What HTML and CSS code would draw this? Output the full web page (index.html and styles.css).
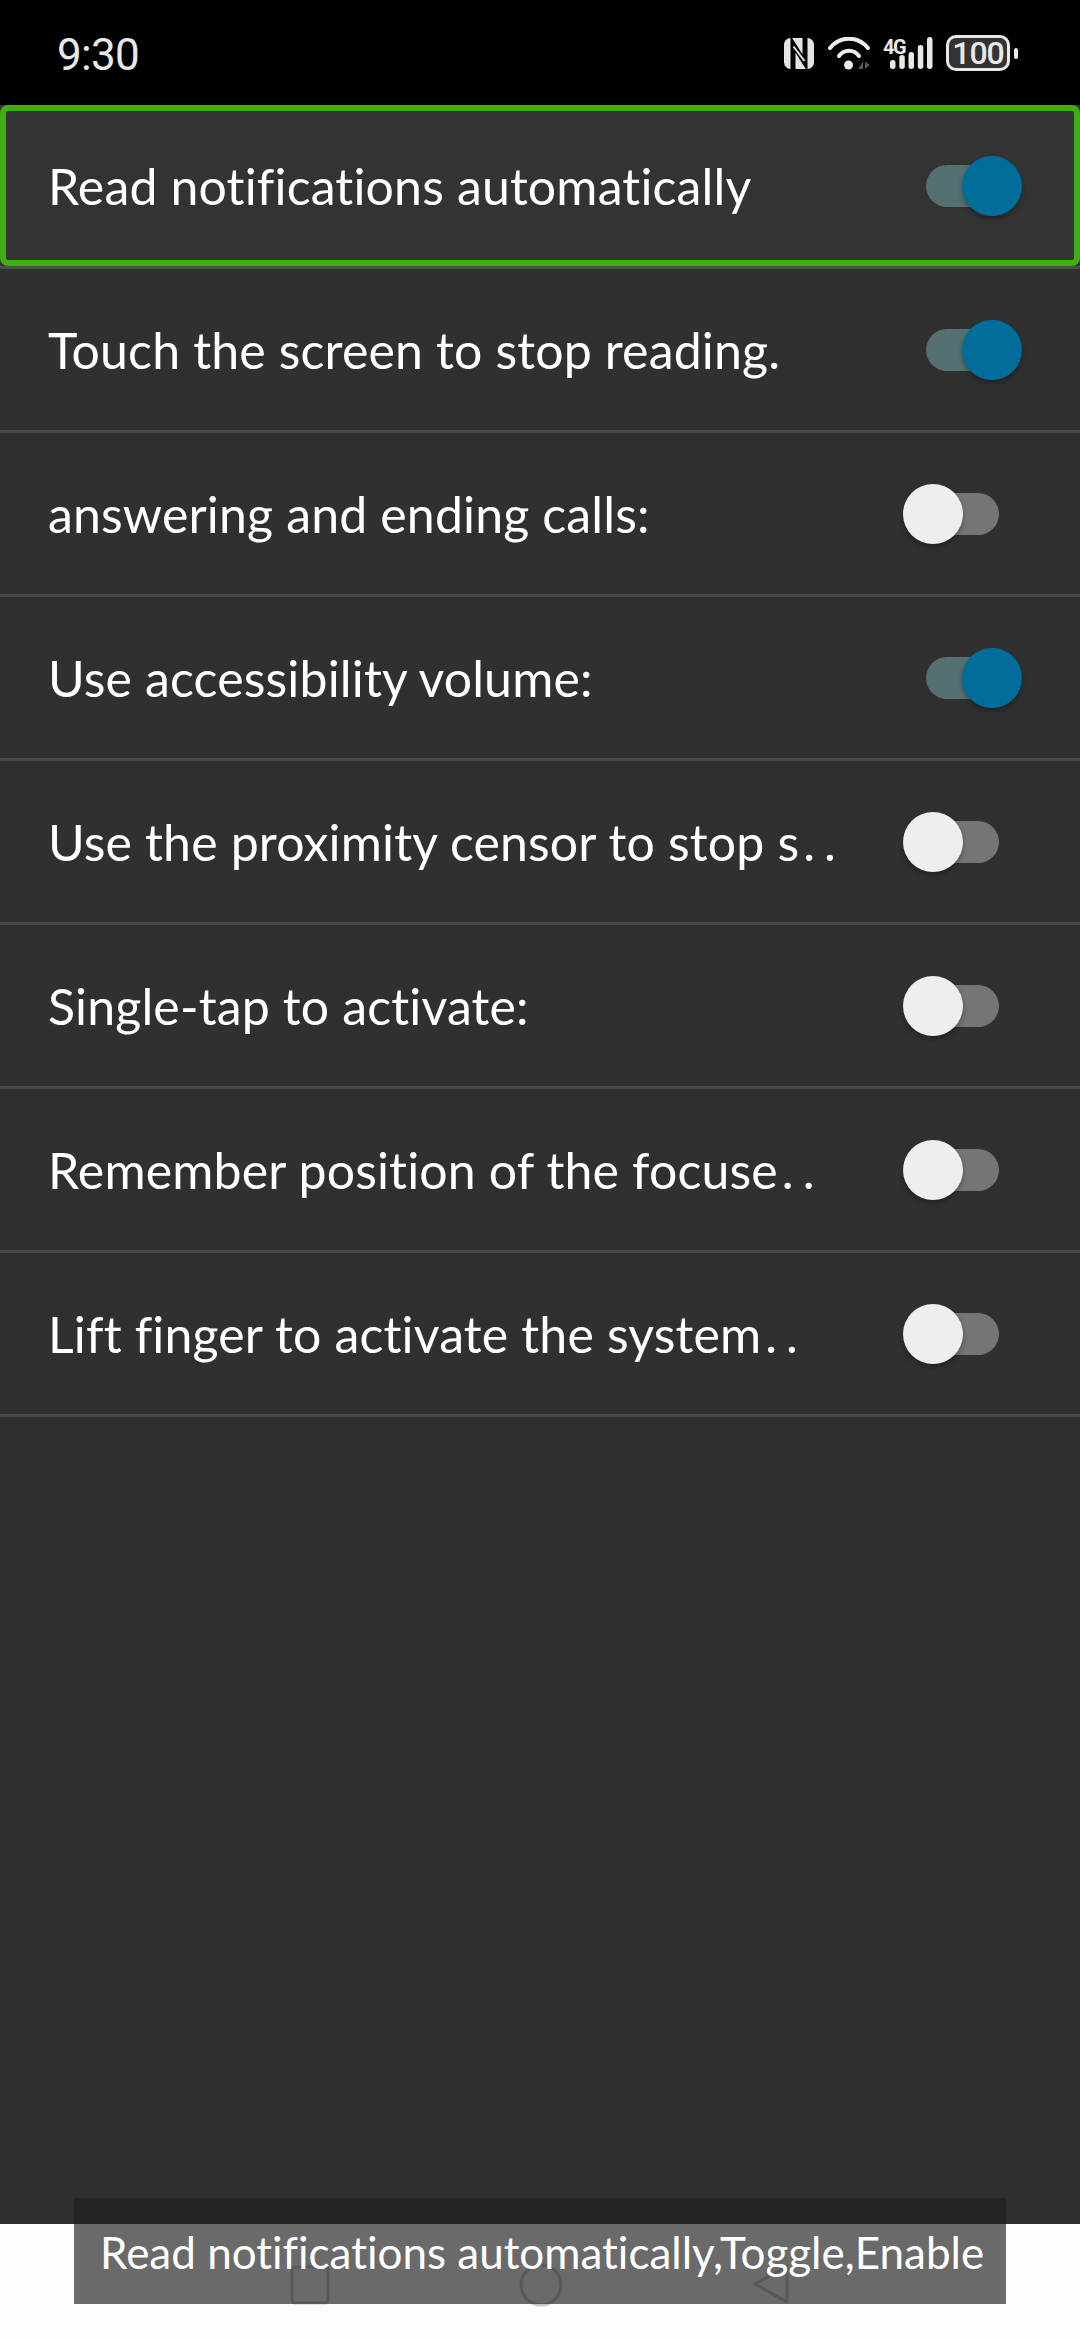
FILE: index.html
```html
<!DOCTYPE html>
<html lang="en">
<head>
<meta charset="utf-8">
<title>Screen reader settings</title>
<link rel="stylesheet" href="styles.css">
</head>
<body>
<div class="screen">
  <header class="status">
    <span class="time">9:30</span>
    <div class="status-icons">
      <svg class="ic-nfc" viewBox="0 0 30 31"><rect width="30" height="31" rx="6.500" fill="#e4e4e4"/><path d="M9 31V6L21 25V0" fill="none" stroke="#000" stroke-width="5"/><path d="M9.500 8.500L20.500 23" fill="none" stroke="#e4e4e4" stroke-width="2"/></svg>
      <svg class="ic-wifi" viewBox="0 0 44 34"><g fill="none" stroke="#ececec" stroke-width="4" stroke-linecap="round"><path d="M2 11C12 -1.500 30 -1.500 40 11"/><path d="M11 19C16 12 26 12 31 19"/></g><circle cx="20.500" cy="28" r="4.500" fill="#ececec"/><path d="M30 32H35V24.500ZM37 24.500V32L42 28Z" fill="#555"/></svg>
      <svg class="ic-signal" viewBox="0 -4 52 38"><text class="net" x="1" y="17">4G</text><g fill="#e8e8e8"><rect x="8" y="23" width="5.500" height="9" rx="2.700"/><rect x="17.300" y="18" width="5.500" height="14" rx="2.700"/><rect x="26.500" y="15" width="5.500" height="17" rx="2.700"/><rect x="35.800" y="8" width="5.500" height="24" rx="2.700"/><rect x="45" y="0" width="5.500" height="32" rx="2.700"/></g></svg>
      <div class="battery"><span class="battery-body">100</span><i class="battery-nub"></i></div>
    </div>
  </header>

  <main class="list">
    <div class="row row-focused"><span class="label">Read notifications automatically</span><span class="switch on"><i class="track"></i><i class="thumb"></i></span></div>
    <div class="row"><span class="label">Touch the screen to stop reading.</span><span class="switch on"><i class="track"></i><i class="thumb"></i></span></div>
    <div class="row"><span class="label">answering and ending calls:</span><span class="switch"><i class="thumb"></i><i class="track"></i></span></div>
    <div class="row"><span class="label">Use accessibility volume:</span><span class="switch on"><i class="track"></i><i class="thumb"></i></span></div>
    <div class="row"><span class="label">Use the proximity censor to stop s<span class="dots">..</span></span><span class="switch"><i class="thumb"></i><i class="track"></i></span></div>
    <div class="row"><span class="label">Single-tap to activate:</span><span class="switch"><i class="thumb"></i><i class="track"></i></span></div>
    <div class="row"><span class="label">Remember position of the focuse<span class="dots">..</span></span><span class="switch"><i class="thumb"></i><i class="track"></i></span></div>
    <div class="row"><span class="label">Lift finger to activate the system<span class="dots">..</span></span><span class="switch"><i class="thumb"></i><i class="track"></i></span></div>
  </main>

  <nav class="navbar">
    <svg class="nav-square" viewBox="0 0 40 40"><rect x="2" y="2" width="36" height="36" rx="3" fill="none" stroke="#c8c8c8" stroke-width="3"/></svg>
    <svg class="nav-circle" viewBox="0 0 44 44"><circle cx="22" cy="22" r="20" fill="none" stroke="#c8c8c8" stroke-width="3"/></svg>
    <svg class="nav-back" viewBox="0 0 38 42"><path d="M35 3V39L3 21Z" fill="none" stroke="#c8c8c8" stroke-width="3" stroke-linejoin="round"/></svg>
  </nav>

  <div class="toast">Read notifications automatically,Toggle,Enable</div>
</div>
</body>
</html>
```

FILE: styles.css
```css
* { box-sizing: border-box; }
html, body { margin: 0; padding: 0; }
body { width: 1080px; height: 2340px; overflow: hidden; background: #303030; font-family: "Lato", "Liberation Sans", sans-serif; font-variant-ligatures: none; }
.screen { position: relative; width: 1080px; height: 2340px; display: flex; flex-direction: column; }

.status { height: 105px; flex: none; background: #000; display: flex; align-items: flex-start; justify-content: space-between; padding: 35px 62px 0 57px; }
.time { font-family: "Roboto", sans-serif; font-size: 44px; line-height: 40px; color: #e8e8e8; letter-spacing: -.7px; }
.status-icons { display: flex; align-items: flex-start; }
.ic-nfc { width: 30px; height: 31px; margin-top: 3px; }
.ic-wifi { width: 44px; height: 34px; margin: 2px 0 0 14px; }
.ic-signal { width: 52px; height: 38px; margin: -2px 0 0 10px; }
.net { font-family: "Roboto", sans-serif; font-weight: 700; font-size: 20px; fill: #e8e8e8; letter-spacing: -1.500px; }
.battery { display: flex; align-items: center; margin-left: 12px; }
.battery-body { width: 64px; height: 36px; border: 3px solid #e8e8e8; border-radius: 10px; background: #333; color: #e8e8e8; font-family: "Roboto", sans-serif; font-weight: 500; font-size: 32px; line-height: 30px; letter-spacing: -1px; text-align: center; }
.battery-nub { width: 4px; height: 11px; margin-left: 4px; border-radius: 2px; background: #e8e8e8; }

.list { flex: none; display: flex; flex-direction: column; }
.row { height: 164px; display: flex; align-items: center; justify-content: space-between; padding-left: 48px; border-bottom: 3px solid #484848; background: #303030; }
.row-focused { position: relative; background: #333; border-bottom-color: #4a4f48; }
.row-focused::after { content: ""; position: absolute; inset: 0 0 -0px 0; border: 6px solid #3fae10; border-radius: 8px; }
.label { font-size: 50px; line-height: 60px; color: #fff; white-space: nowrap; letter-spacing: .15px; }
.dots { margin-left: 4px; letter-spacing: 9px; }

.switch { position: relative; flex: none; display: flex; align-items: center; width: 96px; height: 60px; margin-right: 81px; }
.switch.on { margin-right: 58px; }
.track { position: absolute; top: 9px; left: 10px; width: 86px; height: 42px; border-radius: 21px; background: #757575; }
.switch.on .track { left: 0; background: #557070; }
.thumb { position: absolute; top: 0; left: 0; z-index: 1; width: 60px; height: 60px; border-radius: 50%; background: #eee; box-shadow: 0 3px 5px rgba(0,0,0,.3); }
.switch.on .thumb { left: 36px; background: #006d9b; }

.navbar { flex: 1; margin-top: 807px; background: #fdfdfd; display: flex; justify-content: center; align-items: flex-start; gap: 189px; padding-top: 39px; }
.nav-square { width: 40px; height: 40px; margin-top: 2px; }
.nav-circle { width: 44px; height: 44px; }
.nav-back { width: 38px; height: 42px; }

.toast { position: absolute; left: 74px; top: 2198px; width: 932px; height: 106px; padding: 24px 0 0 26px; background: rgba(33,33,33,.67); color: #fff; font-size: 44px; line-height: 60px; white-space: nowrap; }
```
